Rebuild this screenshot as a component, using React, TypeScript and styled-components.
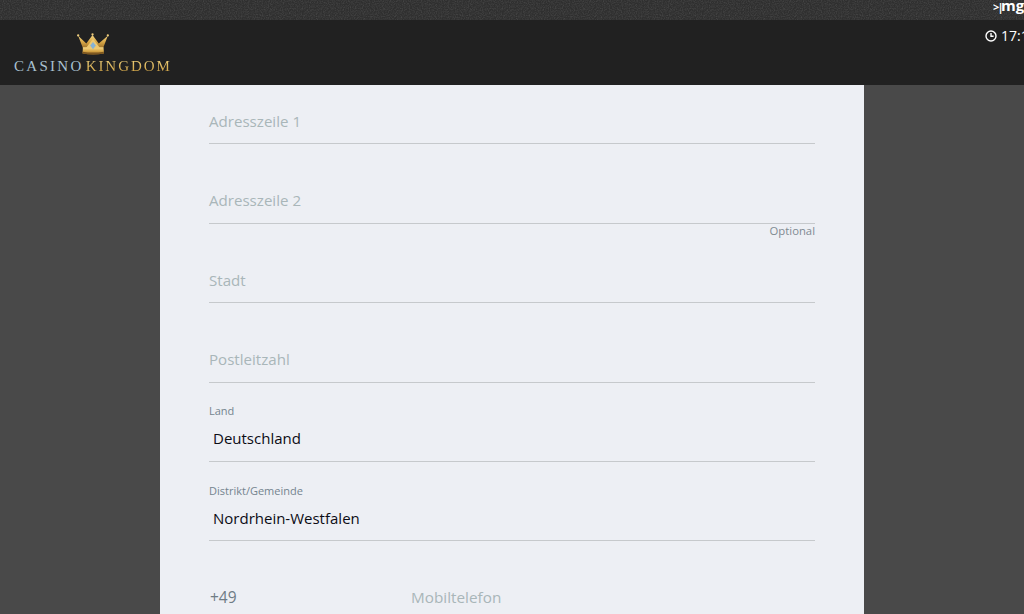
import React from "react";
import styled, { createGlobalStyle } from "styled-components";

const noise = encodeURIComponent(
  `<svg xmlns='http://www.w3.org/2000/svg' width='200' height='20'><filter id='n' x='0' y='0' width='100%' height='100%'><feTurbulence type='fractalNoise' baseFrequency='.85' numOctaves='2' seed='4' stitchTiles='stitch'/><feColorMatrix values='0 0 0 0 1 0 0 0 0 1 0 0 0 0 1 1.1 0 0 0 -.42'/></filter><rect width='200' height='20' filter='url(#n)' opacity='.2'/></svg>`
);

const Global = createGlobalStyle`
  html, body { margin: 0; padding: 0; height: 100%; overflow: hidden; background: #494949; }
  #root { height: 100%; }
  * { box-sizing: border-box; }
`;

const Page = styled.div`
  width: 1024px;
  height: 614px;
  overflow: hidden;
  display: flex;
  flex-direction: column;
  font-family: "Open Sans", "Noto Sans", sans-serif;
  background: #494949;
`;

const TopBar = styled.div`
  height: 20px;
  flex: none;
  display: flex;
  justify-content: flex-end;
  overflow: hidden;
  background-color: #2f2f2f;
  background-image: url("data:image/svg+xml,${noise}");
`;

const Brand = styled.div`
  width: 31px;
  flex: none;
  display: flex;
  align-items: baseline;
  color: #fff;
  font: 700 15px/11px "Open Sans", sans-serif;
  white-space: nowrap;
  overflow: hidden;
`;

const BrandMark = styled.span`
  width: 8px;
  flex: none;
  font-size: 11px;
  letter-spacing: -1.9px;
`;

const Header = styled.header`
  height: 65px;
  flex: none;
  background: #212121;
  display: flex;
  justify-content: space-between;
  align-items: flex-start;
`;

const Logo = styled.div`
  margin: 13px 0 0 14px;
  width: 158px;
  display: flex;
  flex-direction: column;
  align-items: flex-start;
`;

const Crown = styled.svg`
  width: 32px;
  height: 22px;
  margin-left: 63px;
  display: block;
`;

const Wordmark = styled.div`
  margin-top: 4px;
  display: flex;
  gap: 2px;
  font: 400 15px/15px "Liberation Serif", serif;
  white-space: nowrap;
`;

const Casino = styled.span`
  color: #a9c0cf;
  letter-spacing: 2.3px;
`;

const Kingdom = styled.span`
  background: linear-gradient(#f0d27e, #c89a3c);
  -webkit-background-clip: text;
  background-clip: text;
  color: transparent;
  letter-spacing: 1.95px;
`;

const Clock = styled.div`
  width: 39px;
  flex: none;
  margin-top: 8px;
  display: flex;
  align-items: center;
  gap: 4px;
  overflow: hidden;
  color: #fff;
  font-size: 14px;
  line-height: 16px;
  white-space: nowrap;
`;

const ClockIcon = styled.svg`
  flex: none;
`;

const Panel = styled.main`
  width: 704px;
  flex: 1;
  margin-left: 160px;
  padding: 0 49px;
  background: #edeff4;
  overflow: hidden;
`;

const Field = styled.div<{ $height: number; $lift: number }>`
  position: relative;
  height: ${(p) => p.$height}px;
  padding-bottom: ${(p) => p.$lift}px;
  display: flex;
  align-items: flex-end;
  border-bottom: 1px solid #c6c9cc;
`;

const Placeholder = styled.span`
  color: #a9b6b9;
  font-size: 15.1px;
  line-height: 20px;
`;

const Value = styled.span`
  color: #0c0c14;
  font-size: 15px;
  line-height: 20px;
  margin-left: 4px;
`;

const Label = styled.span<{ $bottom: number }>`
  position: absolute;
  left: 0;
  bottom: ${(p) => p.$bottom}px;
  color: #74848f;
  font-size: 11px;
  line-height: 14px;
`;

const Hint = styled.span`
  position: absolute;
  right: 0;
  top: 100%;
  margin-top: 1px;
  color: #7f8a92;
  font-size: 11.3px;
  line-height: 14px;
`;

const PhoneRow = styled.div`
  display: grid;
  grid-template-columns: 202px 1fr;
  padding-top: 46px;
`;

const Prefix = styled.span`
  color: #6f7c84;
  font-size: 15.5px;
  line-height: 20px;
  margin-left: 1px;
`;

const PhonePlaceholder = styled(Placeholder)`
  font-size: 15.3px;
`;

export default function App() {
  return (
    <Page>
      <Global />
      <TopBar>
        <Brand>
          <BrandMark>&gt;|</BrandMark>mg
        </Brand>
      </TopBar>
      <Header>
        <Logo>
          <Crown viewBox="0 0 33 23" aria-hidden="true">
            <defs>
              <linearGradient id="gold" x1="0" y1="0" x2="0" y2="1">
                <stop offset="0" stopColor="#f6d886" />
                <stop offset="0.55" stopColor="#d6a545" />
                <stop offset="1" stopColor="#9b6e28" />
              </linearGradient>
            </defs>
            <path d="M1 3 L9.5 11 L16 2 L22.5 11 L32 3 L27 16 H6 Z" fill="url(#gold)" />
            <path d="M6 15 H27.5 L28 21.5 Q16.5 23.5 5.5 21.5 Z" fill="url(#gold)" />
            <path d="M5.7 19.5 Q16.5 21.5 27.8 19.5 V21.5 Q16.5 23.5 5.7 21.5 Z" fill="#7d5720" />
            <path d="M16.5 6 L24 16 H9 Z" fill="#edc871" />
            <circle cx="1" cy="2.5" r="1.2" fill="#eccb7d" />
            <circle cx="16" cy="1.5" r="1.2" fill="#eccb7d" />
            <circle cx="32" cy="2.5" r="1.2" fill="#eccb7d" />
            <path d="M16.5 9.5 L19.5 13 L16.5 17 L13.5 13 Z" fill="#86b2d4" />
          </Crown>
          <Wordmark>
            <Casino>CASINO</Casino>
            <Kingdom>KINGDOM</Kingdom>
          </Wordmark>
        </Logo>
        <Clock>
          <ClockIcon width="12" height="12" viewBox="0 0 12 12" fill="none" stroke="#fff" strokeWidth="1.4" aria-hidden="true">
            <circle cx="6" cy="6" r="5" />
            <path d="M6 3v3.3h2.6" />
          </ClockIcon>
          <span>17:15</span>
        </Clock>
      </Header>
      <Panel>
        <Field $height={59} $lift={12}>
          <Placeholder>Adresszeile 1</Placeholder>
        </Field>
        <Field $height={80} $lift={13}>
          <Placeholder>Adresszeile 2</Placeholder>
          <Hint>Optional</Hint>
        </Field>
        <Field $height={79} $lift={12}>
          <Placeholder>Stadt</Placeholder>
        </Field>
        <Field $height={80} $lift={13}>
          <Placeholder>Postleitzahl</Placeholder>
        </Field>
        <Field $height={79} $lift={13}>
          <Label $bottom={43}>Land</Label>
          <Value>Deutschland</Value>
        </Field>
        <Field $height={79} $lift={12}>
          <Label $bottom={42}>Distrikt/Gemeinde</Label>
          <Value>Nordrhein-Westfalen</Value>
        </Field>
        <PhoneRow>
          <Prefix>+49</Prefix>
          <PhonePlaceholder>Mobiltelefon</PhonePlaceholder>
        </PhoneRow>
      </Panel>
    </Page>
  );
}
